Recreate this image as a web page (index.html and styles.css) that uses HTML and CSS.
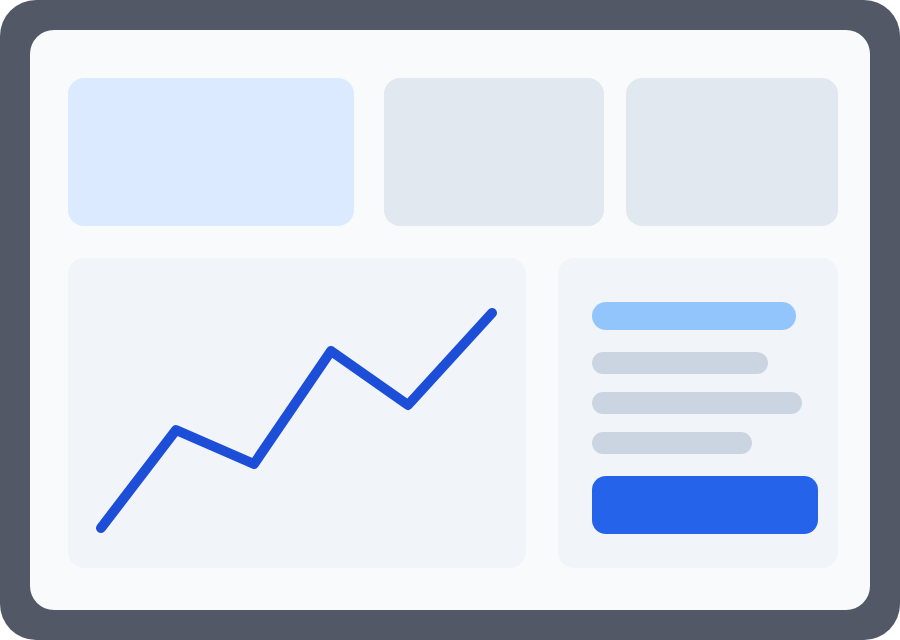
FILE: index.html
```html
<!DOCTYPE html>
<html>
<head>
<meta charset="utf-8">
<link rel="stylesheet" href="styles.css">
</head>
<body>
<div class="frame">
  <div class="panel">
    <div class="top-row">
      <div class="card card-blue card-a"></div>
      <div class="card card-gray card-b"></div>
      <div class="card card-gray card-c"></div>
    </div>
    <div class="bottom-row">
      <div class="chart">
        <svg class="chart-svg" viewBox="0 0 458 310" width="458" height="310">
          <polyline points="33,270 108,172 186,206 263,93 340,147 424,55" fill="none" stroke="#1d4ed8" stroke-width="10" stroke-linecap="round" stroke-linejoin="round"/>
        </svg>
      </div>
      <div class="side">
        <div class="bar bar-blue"></div>
        <div class="bar bar-gray bar-1"></div>
        <div class="bar bar-gray bar-2"></div>
        <div class="bar bar-gray bar-3"></div>
        <div class="button"></div>
      </div>
    </div>
  </div>
</div>
</body>
</html>
```

FILE: styles.css
```css
html, body {
  margin: 0;
  padding: 0;
  background: #ffffff;
}

.frame {
  width: 900px;
  height: 640px;
  box-sizing: border-box;
  padding: 30px;
  background: #525865;
  border-radius: 36px;
}

.panel {
  width: 840px;
  height: 580px;
  box-sizing: border-box;
  background: #f8fafc;
  border-radius: 24px;
  padding: 48px 32px 42px 38px;
  display: flex;
  flex-direction: column;
  gap: 32px;
}

.top-row {
  display: flex;
  height: 148px;
}

.card {
  border-radius: 16px;
  height: 100%;
}

.card-blue { background: #dbeafe; }
.card-gray { background: #e2e8f0; }

.card-a { width: 286px; }
.card-b { width: 220px; margin-left: 30px; }
.card-c { width: 212px; margin-left: 22px; }

.bottom-row {
  display: flex;
  gap: 32px;
  height: 310px;
}

.chart {
  width: 458px;
  height: 310px;
  background: #f1f5f9;
  border-radius: 16px;
}

.chart-svg {
  display: block;
}

.side {
  width: 280px;
  height: 310px;
  box-sizing: border-box;
  background: #f1f5f9;
  border-radius: 16px;
  padding: 44px 0 0 34px;
  display: flex;
  flex-direction: column;
}

.bar {
  border-radius: 999px;
}

.bar-blue {
  width: 204px;
  height: 28px;
  background: #93c5fd;
}

.bar-gray {
  height: 22px;
  background: #cbd5e1;
}

.bar-1 { width: 176px; margin-top: 22px; }
.bar-2 { width: 210px; margin-top: 18px; }
.bar-3 { width: 160px; margin-top: 18px; }

.button {
  width: 226px;
  height: 58px;
  margin-top: 22px;
  background: #2563eb;
  border-radius: 14px;
}
```
